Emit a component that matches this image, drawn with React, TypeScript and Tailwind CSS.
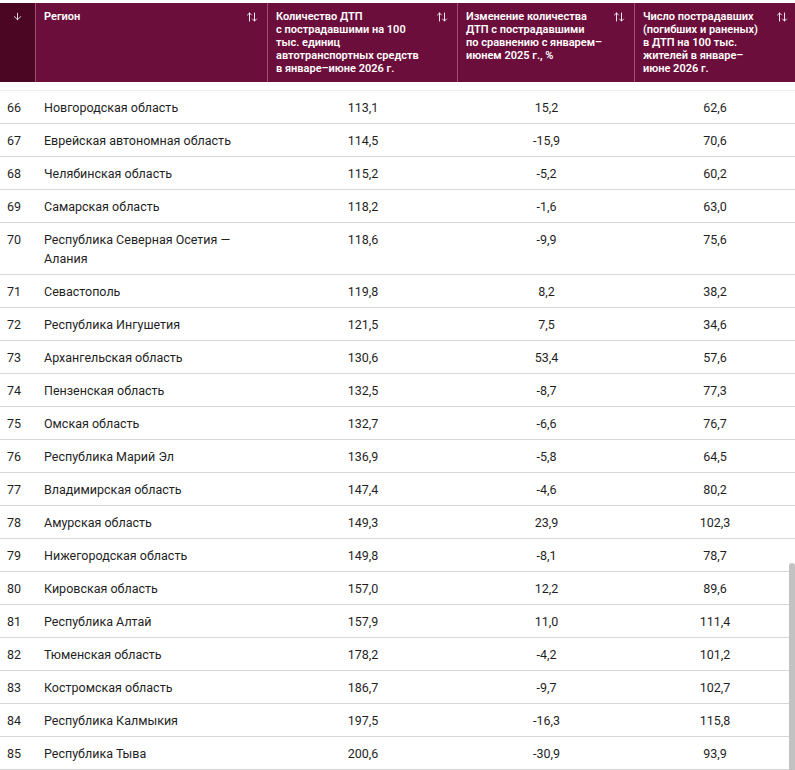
import { ArrowDown, ArrowUpDown } from "lucide-react";

type Row = [number, string, string, string, string];

const rows: Row[] = [
  [66, "Новгородская область", "113,1", "15,2", "62,6"],
  [67, "Еврейская автономная область", "114,5", "-15,9", "70,6"],
  [68, "Челябинская область", "115,2", "-5,2", "60,2"],
  [69, "Самарская область", "118,2", "-1,6", "63,0"],
  [70, "Республика Северная Осетия — Алания", "118,6", "-9,9", "75,6"],
  [71, "Севастополь", "119,8", "8,2", "38,2"],
  [72, "Республика Ингушетия", "121,5", "7,5", "34,6"],
  [73, "Архангельская область", "130,6", "53,4", "57,6"],
  [74, "Пензенская область", "132,5", "-8,7", "77,3"],
  [75, "Омская область", "132,7", "-6,6", "76,7"],
  [76, "Республика Марий Эл", "136,9", "-5,8", "64,5"],
  [77, "Владимирская область", "147,4", "-4,6", "80,2"],
  [78, "Амурская область", "149,3", "23,9", "102,3"],
  [79, "Нижегородская область", "149,8", "-8,1", "78,7"],
  [80, "Кировская область", "157,0", "12,2", "89,6"],
  [81, "Республика Алтай", "157,9", "11,0", "111,4"],
  [82, "Тюменская область", "178,2", "-4,2", "101,2"],
  [83, "Костромская область", "186,7", "-9,7", "102,7"],
  [84, "Республика Калмыкия", "197,5", "-16,3", "115,8"],
  [85, "Республика Тыва", "200,6", "-30,9", "93,9"],
];

const cols = "grid grid-cols-[36px_232px_190px_177px_160px]";

function HeaderCell({ lines, last = false }: { lines: string[]; last?: boolean }) {
  return (
    <div className={`flex justify-between gap-2 pl-2 pt-[7px] ${last ? "pr-[7px]" : "pr-[9px] border-r border-[#a2506f]"}`}>
      <div className="whitespace-nowrap text-[11px] leading-[13px] font-semibold text-white">
        {lines.map((l, i) => (
          <div key={i}>{l}</div>
        ))}
      </div>
      <ArrowUpDown className="mt-[1px] h-[12px] w-[12px] shrink-0 text-white" strokeWidth={1.8} />
    </div>
  );
}

export default function App() {
  return (
    <div className="relative h-[770px] w-[795px] overflow-hidden bg-white text-[#1f1f1f]" style={{ fontFamily: "Roboto, 'Noto Sans', sans-serif" }}>
      <div className={`${cols} mt-[3px] h-[79px] bg-[#6c0e3b]`}>
        <div className="flex justify-center border-r border-[#a2506f] bg-[#4a0623] pt-[8px]">
          <ArrowDown className="h-[11px] w-[11px] text-white" strokeWidth={1.8} />
        </div>
        <HeaderCell lines={["Регион"]} />
        <HeaderCell
          lines={["Количество ДТП", "с пострадавшими на 100", "тыс. единиц", "автотранспортных средств", "в январе–июне 2026 г."]}
        />
        <HeaderCell lines={["Изменение количества", "ДТП с пострадавшими", "по сравнению с январем–", "июнем 2025 г., %"]} />
        <HeaderCell
          last
          lines={["Число пострадавших", "(погибших и раненых)", "в ДТП на 100 тыс.", "жителей в январе–", "июне 2026 г."]}
        />
      </div>

      <div className="mt-[8px] border-t border-[#ececec]">
        {rows.map(([n, region, a, b, c]) => (
          <div key={n} className={`${cols} border-b border-[#d6d6d6] text-[12.5px] leading-[19px]`}>
            <div className="pl-[7px] pt-[7px] pb-[6px]">{n}</div>
            <div className="pl-2 pr-8 pt-[7px] pb-[6px]">{region}</div>
            <div className="pt-[7px] pb-[6px] text-center">{a}</div>
            <div className="pt-[7px] pb-[6px] text-center">{b}</div>
            <div className="pt-[7px] pb-[6px] text-center">{c}</div>
          </div>
        ))}
      </div>

      <div className="absolute right-0 top-[563px] h-[210px] w-[6px] rounded-t-[3px] bg-[#c2c2c2]" />
    </div>
  );
}
